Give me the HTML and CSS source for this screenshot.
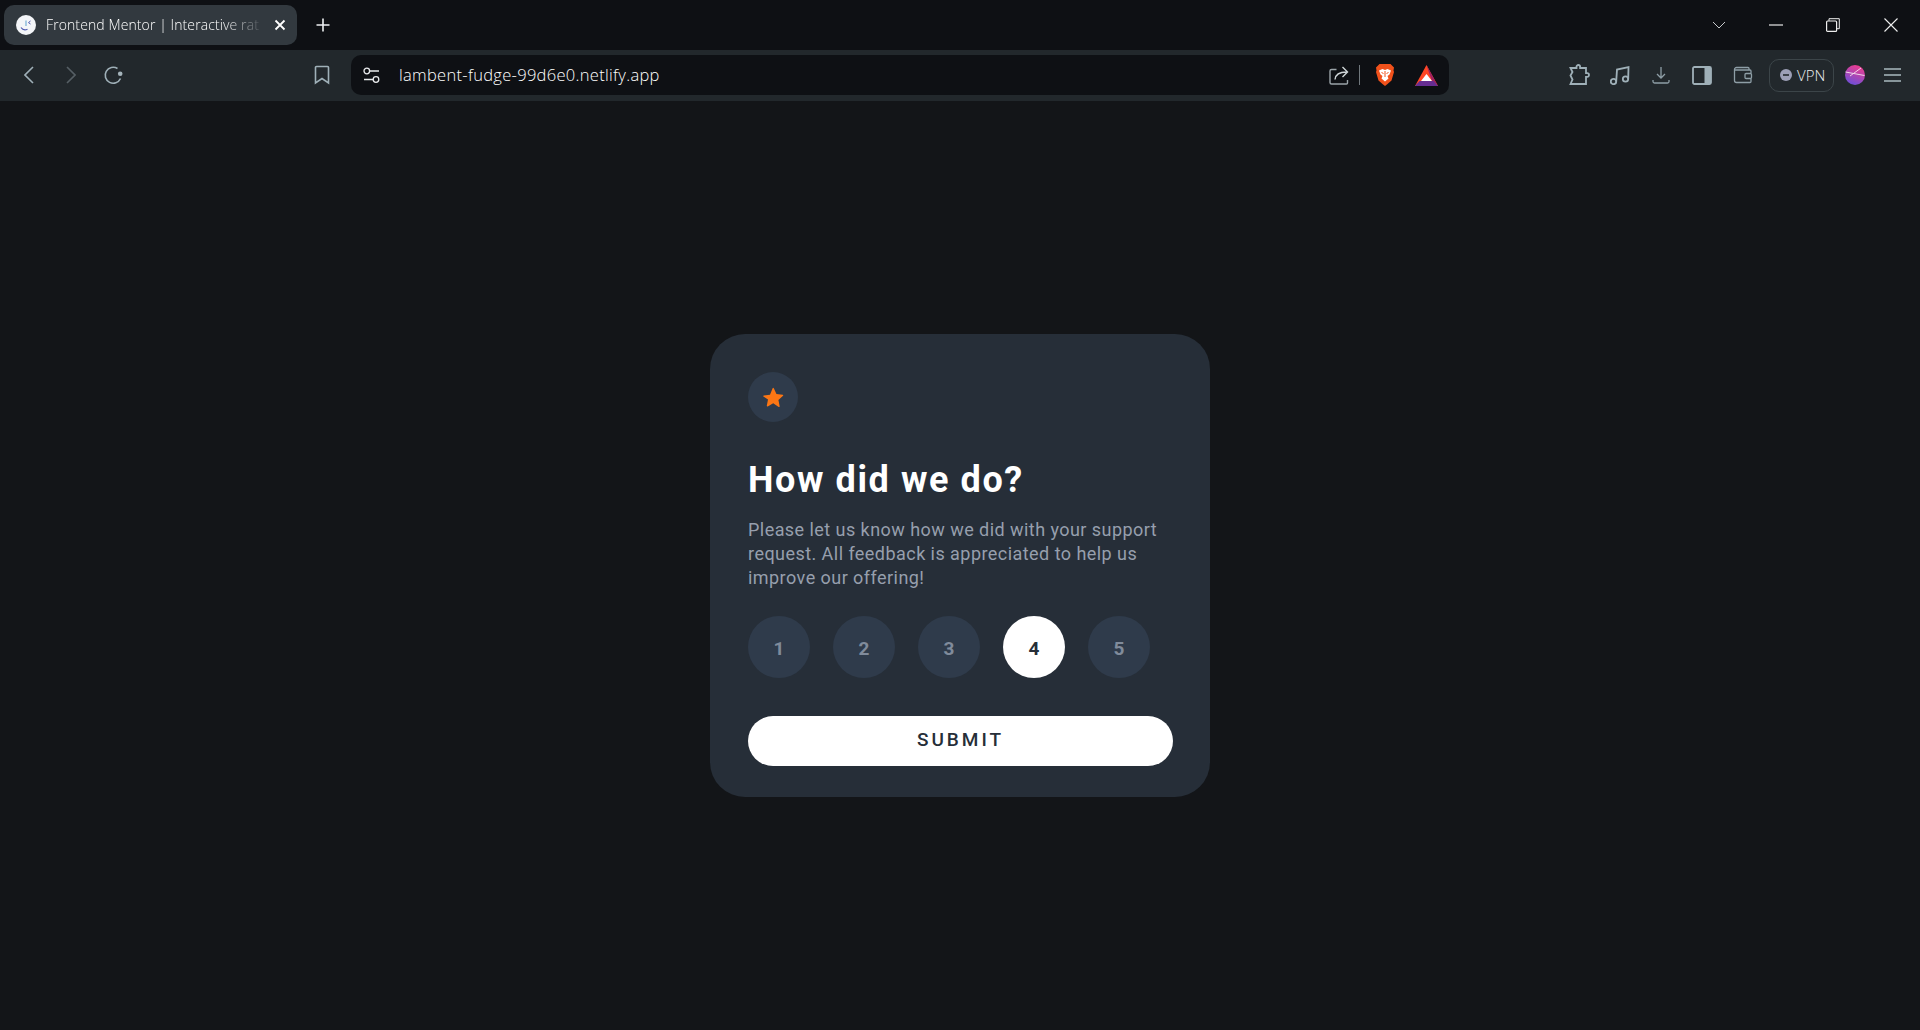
FILE: index.html
```html
<!DOCTYPE html>
<html lang="en">
<head>
    <meta charset="UTF-8">
    <meta name="viewport" content="width=device-width, initial-scale=1.0">
    <title>Frontend Mentor | Interactive rating component</title>
    <link rel="stylesheet" href="styles.css">
</head>
<body>
    <!-- Browser-Leiste -->
    <div class="tabstrip">
        <div class="tab">
            <svg class="favicon" width="20" height="20" viewBox="0 0 20 20">
                <circle cx="10" cy="10" r="10" fill="#f3f5f8"/>
                <path d="M5 12.500c1.500 2.200 4 2.800 6.500 1.700" fill="none" stroke="#4f58b0" stroke-width="1.200"/>
                <path d="M10 5.500v5.500" stroke="#7fb4d8" stroke-width="1.300"/>
                <path d="M14.500 6l-2 1.600 2 1.400" fill="none" stroke="#4f58b0" stroke-width="1"/>
            </svg>
            <span class="tab-title">Frontend Mentor | Interactive rat</span>
            <svg class="tab-close" width="12" height="12" viewBox="0 0 12 12">
                <path d="M1.500 1.500l9 9M10.500 1.500l-9 9" stroke="#fff" stroke-width="1.800"/>
            </svg>
        </div>
        <svg class="new-tab" width="14" height="14" viewBox="0 0 14 14">
            <path d="M7 0.500v13M0.500 7h13" stroke="#eef0f2" stroke-width="1.600"/>
        </svg>
        <div class="window-controls">
            <svg class="win-chevron" width="14" height="8" viewBox="0 0 14 8">
                <path d="M1 1l6 6 6-6" fill="none" stroke="#c6c9cc" stroke-width="1"/>
            </svg>
            <svg class="win-min" width="14" height="2" viewBox="0 0 14 2">
                <path d="M0 1h14" stroke="#e8e8e8" stroke-width="1.200"/>
            </svg>
            <svg class="win-restore" width="14" height="14" viewBox="0 0 14 14">
                <rect x="0.600" y="3" width="10" height="10.400" rx="1" fill="none" stroke="#eee" stroke-width="1.200"/>
                <path d="M3 2.800V0.700h10.300v10H11" fill="none" stroke="#eee" stroke-width="1"/>
            </svg>
            <svg class="win-close" width="14" height="14" viewBox="0 0 14 14">
                <path d="M0.500 0.500l13 13M13.500 0.500l-13 13" stroke="#eee" stroke-width="1.100"/>
            </svg>
        </div>
    </div>

    <div class="toolbar">
        <div class="tool-btn">
            <svg width="10" height="18" viewBox="0 0 10 18"><path d="M9 1L1 9l8 8" class="ic"/></svg>
        </div>
        <div class="tool-btn">
            <svg width="10" height="18" viewBox="0 0 10 18"><path d="M1 1l8 8-8 8" class="ic ic-off"/></svg>
        </div>
        <div class="tool-btn">
            <svg width="20" height="20" viewBox="0 0 20 20">
                <path d="M17.500 13.500A8 8 0 1 1 14.500 3.500" class="ic"/>
                <circle cx="17.200" cy="8.700" r="2.300" fill="#a5b4bb"/>
            </svg>
        </div>
        <div class="tool-btn bookmark">
            <svg width="16" height="20" viewBox="0 0 16 20"><path d="M2.500 1.500h11a1 1 0 0 1 1 1V18L8 13.500 1.500 18V2.500a1 1 0 0 1 1-1z" class="ic"/></svg>
        </div>

        <div class="address">
            <svg class="tune" width="17" height="17" viewBox="0 0 17 17">
                <circle cx="3.800" cy="4" r="2.800" class="tune-line"/>
                <path d="M7 4h9M1 12.500h9" class="tune-line"/>
                <circle cx="13" cy="12.500" r="2.800" class="tune-line"/>
            </svg>
            <span class="url">lambent-fudge-99d6e0.netlify.app</span>
            <svg class="share" width="20" height="20" viewBox="0 0 20 20">
                <path d="M7.500 4.500H2.500A1.500 1.500 0 0 0 1 6v11.500A1.500 1.500 0 0 0 2.500 19h15a1 1 0 0 0 1-1v-3" fill="none" stroke="#9aa3a8" stroke-width="1.400"/>
                <path d="M6 14.500C6.500 9.500 10 7 17.500 7M13.500 2l5 5-5 5" fill="none" stroke="#cfd5d8" stroke-width="1.400"/>
            </svg>
            <span class="address-sep"></span>
            <svg class="brave" width="20" height="24" viewBox="0 0 20 24">
                <path d="M4.500 1h11l3.500 3.500-.5 3 .5 1.500-2.500 8.500-4 3.500L10 23l-2.500-2L3.500 17.500 1 9l.5-1.500-.5-3z" fill="#f1511b"/>
                <path d="M4 7.500l3.500-1.500L10 7l2.500-1L16 7.500l-1.500 4-2 1.500 1 2.500L10 18.500l-3.500-3 1-2.500-2-1.500z" fill="#fff"/>
                <path d="M6.500 9.500l2 1M13.500 9.500l-2 1M10 8v6" stroke="#f1511b" stroke-width="1" fill="none"/>
            </svg>
            <svg class="bat" width="23" height="21" viewBox="0 0 23 21">
                <path d="M11.500 0L0 21h23z" fill="#ff4724"/>
                <path d="M11.500 0L23 21l-6.500-6z" fill="#9e1f63"/>
                <path d="M0 21l4.500-5h14l4.500 5z" fill="#662d91"/>
                <path d="M11.500 9L6 16h11z" fill="#fff"/>
            </svg>
        </div>

        <div class="tool-btn tool-first">
            <svg width="22" height="22" viewBox="0 0 22 22">
                <path d="M2.500 4h6V2.800a1.800 1.800 0 0 1 3.600 0V4H18v5.200h1.200a1.800 1.800 0 0 1 0 3.600H18V20H2.500l2-4.500-2-4 2-3.500z" class="ic-small"/>
            </svg>
        </div>
        <div class="tool-btn">
            <svg width="20" height="20" viewBox="0 0 20 20">
                <circle cx="3.500" cy="16.500" r="2.700" class="ic-small"/>
                <circle cx="15.500" cy="14" r="2.700" class="ic-small"/>
                <path d="M6.200 16.500L7 4.500 18.500 2.200 18.200 14" class="ic-small"/>
            </svg>
        </div>
        <div class="tool-btn">
            <svg width="18" height="18" viewBox="0 0 18 18">
                <path d="M9 1v11M5 8l4 4 4-4M1 14v1.500a1.500 1.500 0 0 0 1.500 1.500h13a1.500 1.500 0 0 0 1.500-1.500V14" class="ic-thin"/>
            </svg>
        </div>
        <div class="tool-btn">
            <svg width="20" height="19" viewBox="0 0 20 19">
                <rect x="1" y="1" width="18" height="17" rx="1.500" class="ic-small"/>
                <rect x="12.500" y="1" width="6.500" height="17" fill="#9fb0b8"/>
            </svg>
        </div>
        <div class="tool-btn">
            <svg width="20" height="18" viewBox="0 0 20 18">
                <path d="M16 4V2.500a1 1 0 0 0-1-1H3.500a2 2 0 0 0-2 2v11a2 2 0 0 0 2 2H17a1 1 0 0 0 1-1v-2.500" class="ic-thin"/>
                <path d="M2 4h15a1 1 0 0 1 1 1v2" class="ic-thin"/>
                <rect x="12" y="7.500" width="6.500" height="5" rx="1" class="ic-thin"/>
            </svg>
        </div>
        <div class="vpn">
            <svg width="12" height="12" viewBox="0 0 12 12">
                <circle cx="6" cy="6" r="6" fill="#9c9fb6"/>
                <path d="M3 6h6" stroke="#22282c" stroke-width="1.600"/>
            </svg>
            <span>VPN</span>
        </div>
        <svg class="avatar" width="20" height="20" viewBox="0 0 20 20">
            <defs>
                <linearGradient id="avatarFill" x1="0.700" y1="0" x2="0.300" y2="1">
                    <stop offset="0" stop-color="#f03c8e"/>
                    <stop offset="1" stop-color="#6a4fd8"/>
                </linearGradient>
            </defs>
            <circle cx="10" cy="10" r="10" fill="url(#avatarFill)"/>
            <path d="M0.500 7l19 3.500M5 11l11-8" stroke="#f6e3ee" stroke-width="0.900" fill="none"/>
        </svg>
        <svg class="menu" width="17" height="14" viewBox="0 0 17 14">
            <path d="M0 1h17M0 7h17M0 13h17" stroke="#87959a" stroke-width="2"/>
        </svg>
    </div>

    <!-- Bewertungskarte -->
    <main class="page">
        <div class="card">
            <div class="star-badge">
                <svg width="22" height="21" viewBox="0 0 17 16">
                    <path d="M9.132.84l2.028 4.4 4.82.572a.5.5 0 0 1 .284.87l-3.564 3.296.946 4.761a.5.5 0 0 1-.74.537L8.670 12.450l-4.236 2.426a.5.5 0 0 1-.74-.537l.946-4.761L1.076 7.282a.5.5 0 0 1 .284-.87l4.82-.572L8.208.840a.5.5 0 0 1 .924 0z" fill="#fc7614"/>
                </svg>
            </div>
            <h1>How did we do?</h1>
            <p>Please let us know how we did with your support request. All feedback is appreciated to help us improve our offering!</p>
            <div class="rating">
                <span class="rate">1</span>
                <span class="rate">2</span>
                <span class="rate">3</span>
                <span class="rate active">4</span>
                <span class="rate">5</span>
            </div>
            <button type="button" class="submit">SUBMIT</button>
        </div>
    </main>
</body>
</html>
```

FILE: styles.css
```css
* {
    box-sizing: border-box;
}
html, body {
    margin: 0;
    height: 100%;
}
body {
    display: flex;
    flex-direction: column;
    height: 100vh;
    overflow: hidden;
    background-color: #131518;
    font-family: "Open Sans", "Noto Sans", sans-serif;
}

/* Tab-Leiste */
.tabstrip {
    display: flex;
    align-items: center;
    flex: none;
    height: 50px;
    padding-left: 4px;
    background-color: #0e1014;
}
.tab {
    display: flex;
    align-items: center;
    width: 293px;
    height: 40px;
    padding: 0 11px 0 12px;
    border-radius: 10px;
    background-color: #32393f;
    color: #fff;
    font-size: 14px;
    font-weight: 300;
}
.favicon {
    flex: none;
}
.tab-title {
    flex: 1;
    margin-left: 10px;
    padding-bottom: 2px;
    white-space: nowrap;
    letter-spacing: 0.1px;
    -webkit-mask-image: linear-gradient(to right, #000 80%, transparent 100%);
    mask-image: linear-gradient(to right, #000 80%, transparent 100%);
}
.tab-close {
    flex: none;
    margin-left: 8px;
}
.new-tab {
    margin-left: 19px;
}
.window-controls {
    display: flex;
    align-items: center;
    margin-left: auto;
}
.win-chevron {
    margin-right: 43px;
}
.win-min {
    margin-right: 43px;
}
.win-restore {
    margin-right: 44px;
}
.win-close {
    margin-right: 22px;
}

/* Adressleiste */
.toolbar {
    display: flex;
    align-items: center;
    flex: none;
    height: 51px;
    padding: 0 0 1px 8px;
    background-color: #22282c;
}
.tool-btn {
    display: flex;
    justify-content: center;
    align-items: center;
    flex: none;
    width: 42px;
    height: 40px;
}
.tool-btn.bookmark {
    margin-left: 167px;
}
.tool-btn.tool-first {
    margin-left: 109px;
}
.tool-first, .tool-first ~ .tool-btn {
    width: 41px;
}
.ic {
    fill: none;
    stroke: #9fb0b8;
    stroke-width: 1.600;
}
.ic-off {
    stroke: #565f65;
}
.ic-small {
    fill: none;
    stroke: #9fb0b8;
    stroke-width: 1.800;
}
.ic-thin {
    fill: none;
    stroke: #8e9ea6;
    stroke-width: 1.300;
}
.address {
    display: flex;
    align-items: center;
    flex: none;
    width: 1098px;
    height: 40px;
    margin-left: 8px;
    padding-left: 12px;
    border-radius: 10px;
    background-color: #0e1014;
}
.tune {
    flex: none;
}
.tune-line {
    fill: none;
    stroke: #e8eaec;
    stroke-width: 1.300;
}
.url {
    margin-left: 19px;
    padding-bottom: 2px;
    color: #fff;
    font-size: 16.500px;
    font-weight: 300;
    letter-spacing: 0.300px;
}
.share {
    margin-left: auto;
}
.address-sep {
    width: 1px;
    height: 20px;
    margin: 0 15px 0 10px;
    background-color: #70777c;
}
.brave {
    flex: none;
}
.bat {
    flex: none;
    margin: 0 11px 0 20px;
}
.vpn {
    display: flex;
    align-items: center;
    gap: 5px;
    flex: none;
    width: 65px;
    height: 33px;
    margin-left: 6px;
    padding-left: 10px;
    border: 1px solid #3c4549;
    border-radius: 10px;
    color: #eceef0;
    font-size: 15px;
    font-weight: 300;
}
.avatar {
    flex: none;
    margin-left: 11px;
}
.menu {
    flex: none;
    margin-left: 19px;
}

/* Bewertungskarte */
.page {
    display: flex;
    justify-content: center;
    align-items: center;
    flex: 1;
}
.card {
    width: 500px;
    padding: 38px 37px 31px 38px;
    border-radius: 35px;
    background-color: #262e38;
}
.star-badge {
    display: flex;
    justify-content: center;
    align-items: center;
    width: 50px;
    height: 50px;
    padding-right: 1px;
    border-radius: 50%;
    background-color: #2f3b4b;
}
h1 {
    margin: 36px 0 0;
    color: #fff;
    font-family: Roboto, sans-serif;
    font-size: 36px;
    font-weight: 700;
    line-height: 44px;
    letter-spacing: 1.600px;
}
p {
    margin: 16px 0 0;
    color: #969fad;
    font-family: Roboto, sans-serif;
    font-size: 18px;
    line-height: 24px;
    letter-spacing: 0.450px;
}
.rating {
    display: flex;
    gap: 23px;
    margin-top: 26px;
}
.rate {
    display: flex;
    justify-content: center;
    align-items: center;
    width: 62px;
    height: 62px;
    padding-top: 2px;
    border-radius: 50%;
    background-color: #2f3b4b;
    color: #808b9b;
    font-family: Roboto, sans-serif;
    font-size: 19px;
    font-weight: 700;
}
.rate.active {
    background-color: #fff;
    color: #262e38;
}
.submit {
    display: block;
    width: 100%;
    height: 50px;
    margin-top: 38px;
    padding-bottom: 5px;
    border: none;
    border-radius: 25px;
    background-color: #fff;
    color: #262e38;
    font-family: Roboto, sans-serif;
    font-size: 19px;
    font-weight: 500;
    letter-spacing: 3px;
}
```
